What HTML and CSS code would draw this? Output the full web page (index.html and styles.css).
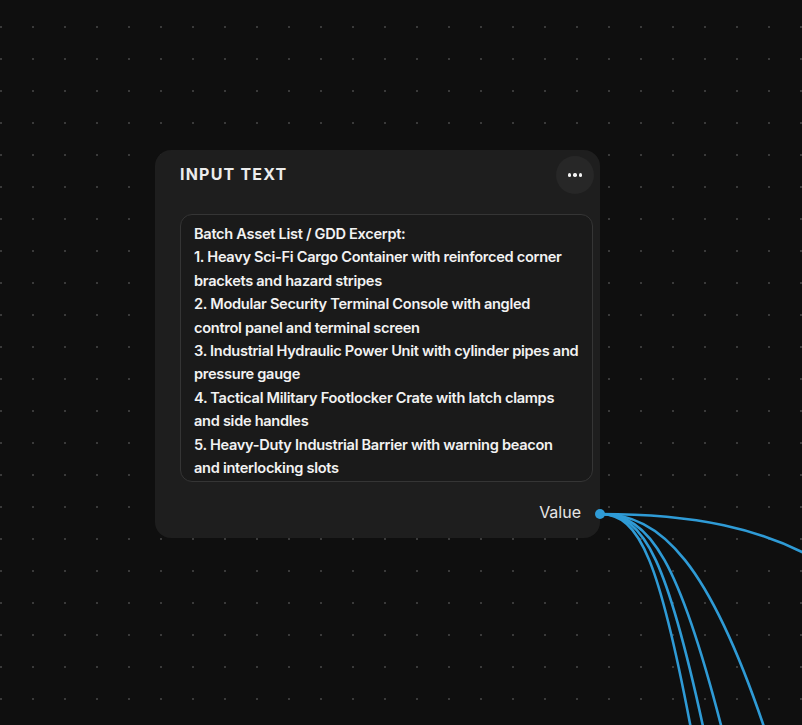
FILE: index.html
```html
<!DOCTYPE html>
<html>
<head>
<meta charset="utf-8">
<link rel="stylesheet" href="styles.css">
</head>
<body>
<div class="canvas">
  <svg class="edges" width="802" height="725" viewBox="0 0 802 725">
    <g fill="none" stroke="#2f9bd6" stroke-width="2.6" stroke-linecap="round">
      <path d="M600 514 C700 514 760 530 810 556"/>
      <path d="M600 514 C640 514 660 560 694 745"/>
      <path d="M600 514 C645 514 668 560 707 745"/>
      <path d="M600 514 C650 514 680 560 726 745"/>
      <path d="M600 514 C660 514 710 560 770 745"/>
    </g>
  </svg>
  <div class="node">
    <div class="node-head">
      <span class="node-title">INPUT TEXT</span>
      <button class="menu-btn"><span></span><span></span><span></span></button>
    </div>
    <div class="textbox">Batch Asset List / GDD Excerpt:<br>1. Heavy Sci-Fi Cargo Container with reinforced corner brackets and hazard stripes<br>2. Modular Security Terminal Console with angled control panel and terminal screen<br>3. Industrial Hydraulic Power Unit with cylinder pipes and pressure gauge<br>4. Tactical Military Footlocker Crate with latch clamps and side handles<br>5. Heavy-Duty Industrial Barrier with warning beacon and interlocking slots</div>
    <div class="node-foot">
      <span class="port-label">Value</span>
    </div>
    <span class="handle"></span>
  </div>
</div>
</body>
</html>
```
FILE: styles.css
```css
html, body {
  margin: 0;
  padding: 0;
  background: #0f0f0f;
}
.canvas {
  position: relative;
  width: 802px;
  height: 725px;
  overflow: hidden;
  background-color: #0f0f0f;
  background-image: radial-gradient(circle, #3a3a3a 0.9px, transparent 1.2px);
  background-size: 32px 32px;
  background-position: -15px 11px;
  font-family: Inter, "Noto Sans", sans-serif;
}
.edges {
  position: absolute;
  left: 0;
  top: 0;
}
.node {
  position: absolute;
  left: 155px;
  top: 150px;
  width: 445px;
  height: 388px;
  box-sizing: border-box;
  background: #1e1e1e;
  border-radius: 16px;
  padding: 6px 7px 0 25px;
  display: flex;
  flex-direction: column;
}
.node-head {
  display: flex;
  align-items: center;
  justify-content: space-between;
  height: 38px;
}
.node-title {
  color: #ececec;
  font-weight: 700;
  font-size: 16px;
  letter-spacing: 1.2px;
  margin-top: -2px;
}
.menu-btn {
  width: 38px;
  height: 38px;
  margin-right: -1px;
  border-radius: 50%;
  border: none;
  background: #272727;
  display: flex;
  align-items: center;
  justify-content: center;
  gap: 2px;
  padding: 0;
}
.menu-btn span {
  width: 3.4px;
  height: 3.4px;
  border-radius: 50%;
  background: #f2f2f2;
}
.textbox {
  margin-top: 20px;
  height: 268px;
  box-sizing: border-box;
  border: 1.5px solid #353535;
  border-radius: 12px;
  background: #1a1a1a;
  padding: 8px 11px 0 13px;
  color: #f2f2f2;
  font-size: 14.6px;
  line-height: 23.4px;
  letter-spacing: -0.3px;
  font-weight: 600;
}
.node-foot {
  display: flex;
  justify-content: flex-end;
  margin-top: 18px;
  padding-right: 12px;
}
.port-label {
  color: #e6e6e6;
  font-size: 16px;
  line-height: 24px;
}
.handle {
  position: absolute;
  right: -5px;
  top: 359px;
  width: 10px;
  height: 10px;
  border-radius: 50%;
  background: #2f9bd6;
}
```
